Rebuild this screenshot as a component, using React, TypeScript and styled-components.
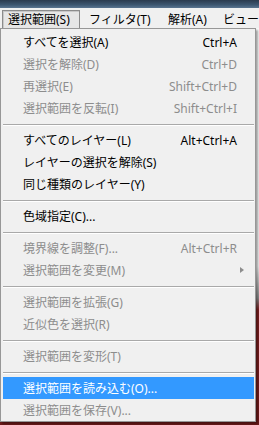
import React from "react";
import styled, { createGlobalStyle } from "styled-components";

const Global = createGlobalStyle`
  html, body { margin: 0; padding: 0; }
  body {
    width: 259px;
    height: 425px;
    overflow: hidden;
    background: #f0f0f0;
    font-family: "Noto Sans", "Noto Sans CJK JP", sans-serif;
  }
`;

const Screen = styled.div`
  width: 259px;
  height: 425px;
  display: flex;
  flex-direction: column;
  overflow: hidden;
`;

const TitleStrip = styled.div`
  height: 8px;
  flex: none;
  background: linear-gradient(180deg, #2b3b4e 0%, #3d5670 60%, #5a7590 100%);
`;

const MenuBar = styled.div`
  height: 20px;
  flex: none;
  display: flex;
  align-items: stretch;
  gap: 3px;
  background: #f0f0f0;
  padding-left: 2px;
`;

const BarItem = styled.div<{ $pressed?: boolean; $w: number }>`
  width: ${(p) => p.$w}px;
  flex: none;
  box-sizing: border-box;
  margin-top: 2px;
  padding-left: 5px;
  font-size: 12px;
  line-height: 17px;
  color: #000;
  white-space: nowrap;
  border: 1px solid ${(p) => (p.$pressed ? "#8c8c8c" : "transparent")};
  border-bottom: none;
  background: ${(p) => (p.$pressed ? "#e6e6e6" : "transparent")};
  box-shadow: ${(p) => (p.$pressed ? "inset 1px 1px 0 #c8c8c8" : "none")};
`;

const Workspace = styled.div`
  position: relative;
  flex: 1;
  background: linear-gradient(
    180deg,
    #fafafa 0%,
    #f2f2f2 60%,
    #8a8a8a 68%,
    #7a1f1f 71%,
    #6e1a1a 100%
  );
`;

const Dropdown = styled.div`
  position: absolute;
  left: 0;
  top: 0;
  width: 256px;
  box-sizing: border-box;
  background: #f0f0f0;
  border: 1px solid #979797;
  padding: 2px 1px 0 2px;
  box-shadow: 2px 2px 2px rgba(0, 0, 0, 0.35);
`;

const Item = styled.div<{ $disabled?: boolean; $active?: boolean }>`
  height: 22px;
  display: flex;
  align-items: center;
  padding-left: 20px;
  padding-right: 17px;
  font-size: 12px;
  color: ${(p) => (p.$active ? "#ffffff" : p.$disabled ? "#8d8d8d" : "#000000")};
  background: ${(p) => (p.$active ? "#3399ff" : "transparent")};
  white-space: nowrap;
  position: relative;
`;

const Label = styled.span`
  flex: 1;
`;

const Shortcut = styled.span`
  text-align: right;
`;

const Arrow = styled.span<{ $disabled?: boolean }>`
  position: absolute;
  right: 10px;
  top: 8px;
  width: 0;
  height: 0;
  border-top: 3.5px solid transparent;
  border-bottom: 3.5px solid transparent;
  border-left: 4px solid ${(p) => (p.$disabled ? "#8d8d8d" : "#000")};
`;

const Separator = styled.div`
  height: 10px;
  display: flex;
  align-items: center;
  &::before {
    content: "";
    flex: 1;
    height: 1px;
    background: #a9a9a9;
    box-shadow: 0 1px 0 #ffffff;
  }
`;

type Entry =
  | { sep: true }
  | { label: string; shortcut?: string; disabled?: boolean; active?: boolean; sub?: boolean };

const entries: Entry[] = [
  { label: "すべてを選択(A)", shortcut: "Ctrl+A" },
  { label: "選択を解除(D)", shortcut: "Ctrl+D", disabled: true },
  { label: "再選択(E)", shortcut: "Shift+Ctrl+D", disabled: true },
  { label: "選択範囲を反転(I)", shortcut: "Shift+Ctrl+I", disabled: true },
  { sep: true },
  { label: "すべてのレイヤー(L)", shortcut: "Alt+Ctrl+A" },
  { label: "レイヤーの選択を解除(S)" },
  { label: "同じ種類のレイヤー(Y)" },
  { sep: true },
  { label: "色域指定(C)..." },
  { sep: true },
  { label: "境界線を調整(F)...", shortcut: "Alt+Ctrl+R", disabled: true },
  { label: "選択範囲を変更(M)", disabled: true, sub: true },
  { sep: true },
  { label: "選択範囲を拡張(G)", disabled: true },
  { label: "近似色を選択(R)", disabled: true },
  { sep: true },
  { label: "選択範囲を変形(T)", disabled: true },
  { sep: true },
  { label: "選択範囲を読み込む(O)...", active: true },
  { label: "選択範囲を保存(V)...", disabled: true },
];

export default function App() {
  return (
    <Screen>
      <Global />
      <TitleStrip />
      <MenuBar>
        <BarItem $pressed $w={78}>選択範囲(S)</BarItem>
        <BarItem $w={76}>フィルタ(T)</BarItem>
        <BarItem $w={52}>解析(A)</BarItem>
        <BarItem $w={50}>ビュー</BarItem>
      </MenuBar>
      <Workspace>
        <Dropdown>
          {entries.map((e, i) =>
            "sep" in e ? (
              <Separator key={i} />
            ) : (
              <Item key={i} $disabled={e.disabled} $active={e.active}>
                <Label>{e.label}</Label>
                {e.shortcut && <Shortcut>{e.shortcut}</Shortcut>}
                {e.sub && <Arrow $disabled={e.disabled} />}
              </Item>
            )
          )}
        </Dropdown>
      </Workspace>
    </Screen>
  );
}
